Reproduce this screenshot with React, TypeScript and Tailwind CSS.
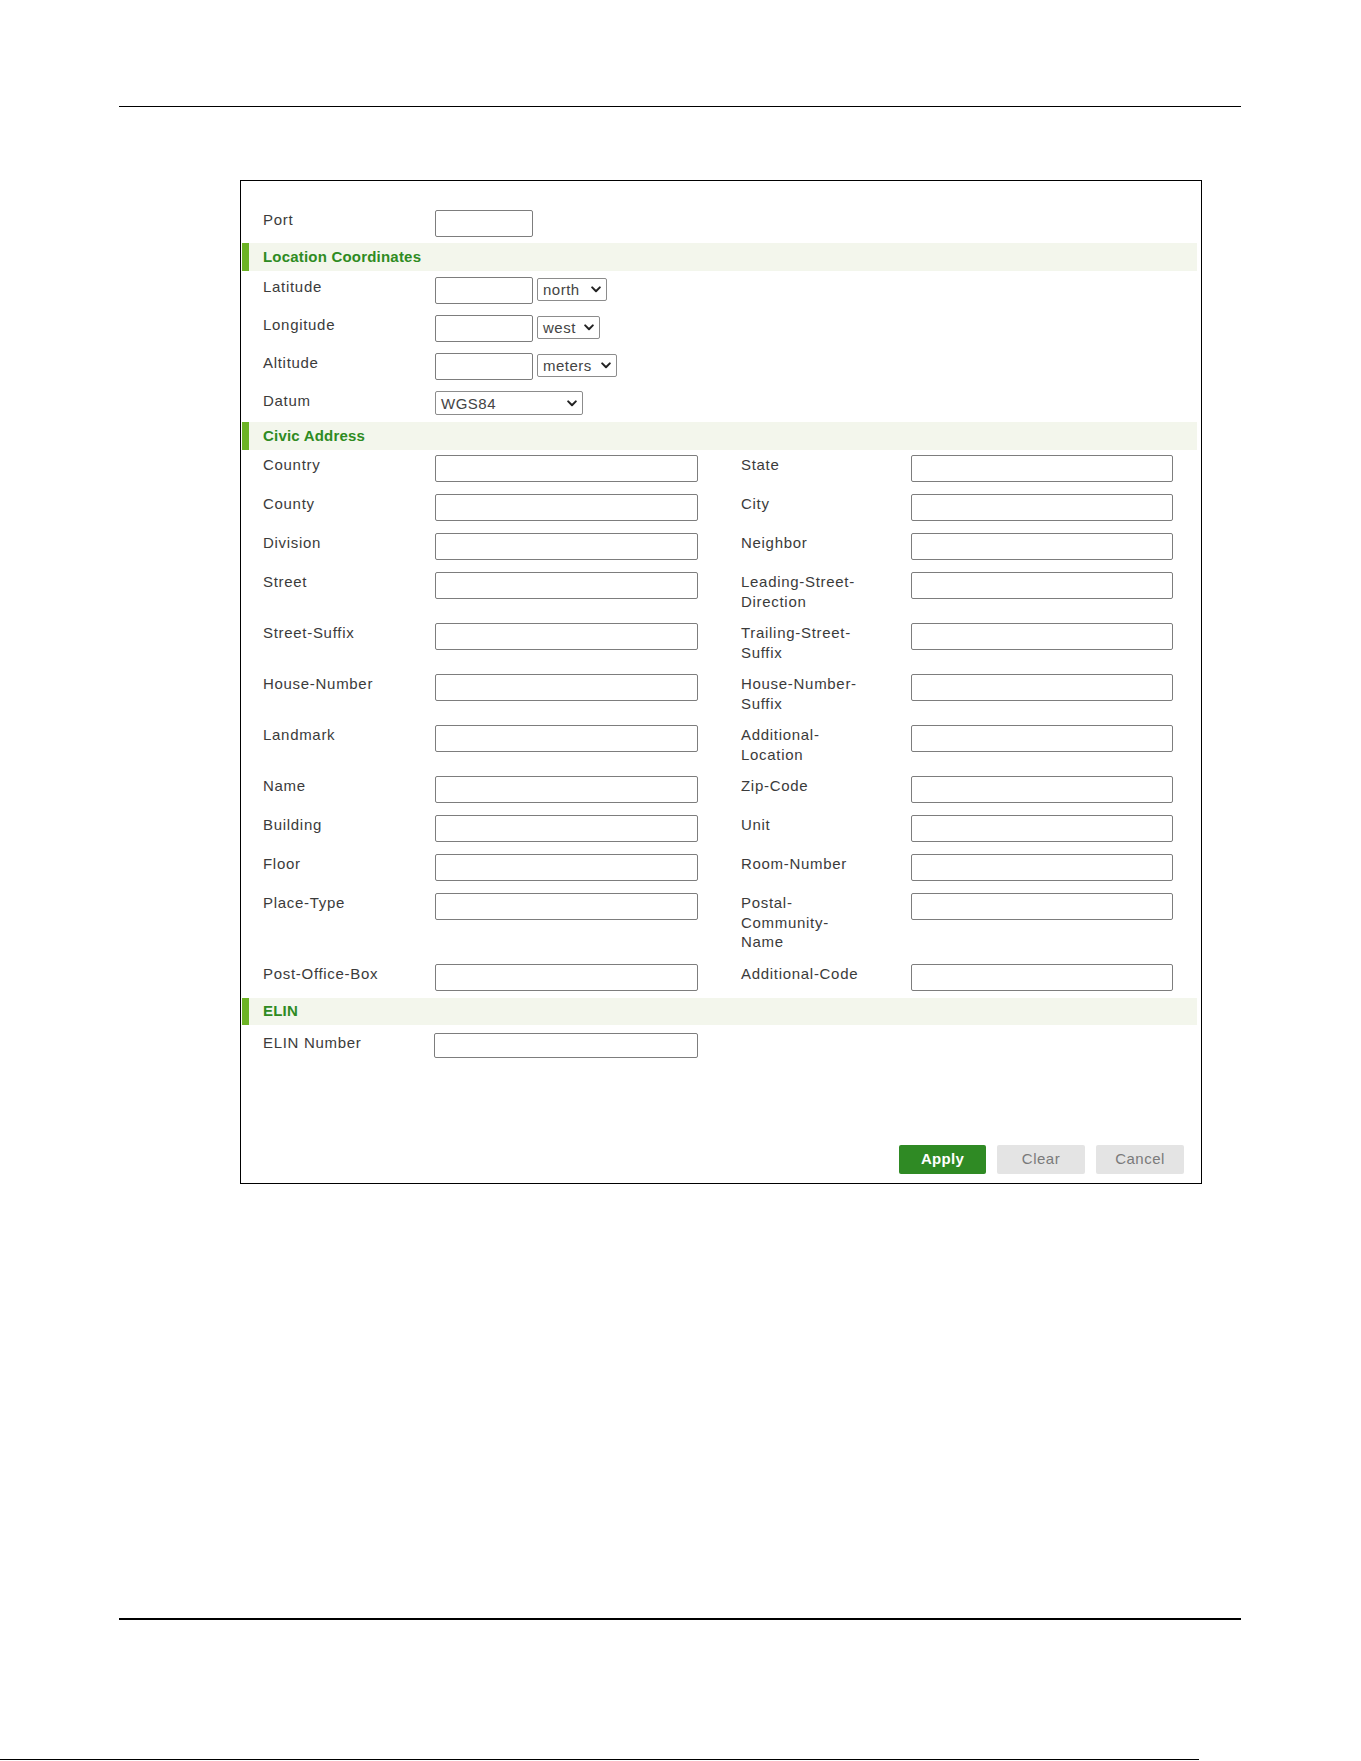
import React from "react";

const FONT = "font-['Liberation_Sans',Arial,sans-serif]";

function Chevron() {
  return (
    <svg width="10" height="7" viewBox="0 0 10 7" className="shrink-0">
      <path d="M1.2 1.4 L5 5.2 L8.8 1.4" fill="none" stroke="#222" strokeWidth="2" strokeLinecap="round" strokeLinejoin="round" />
    </svg>
  );
}

function Select({ value, width }: { value: string; width: string }) {
  return (
    <div
      className={`flex h-[23px] items-center justify-between rounded-[2px] border border-[#8c8c8c] bg-white pl-[5px] pr-[5px] text-[15px] tracking-[0.5px] text-[#444] ${width}`}
    >
      <span className="leading-none">{value}</span>
      <Chevron />
    </div>
  );
}

function Field({ width = "w-[263px]", height = "h-[27px]" }: { width?: string; height?: string }) {
  return <div className={`${width} ${height} shrink-0 rounded-[2px] border border-[#7d7d7d] bg-white`} />;
}

function Label({ lines, width = "w-[172px]" }: { lines: string[]; width?: string }) {
  return (
    <div className={`${width} shrink-0 text-[15px] leading-[19.5px] tracking-[0.7px] text-[#3b3b3b]`}>
      {lines.map((l) => (
        <div key={l}>{l}</div>
      ))}
    </div>
  );
}

function SectionHeader({ title, h = "h-[28px]" }: { title: string; h?: string }) {
  return (
    <div className={`flex ${h} items-stretch bg-[#f3f6ec]`}>
      <div className="w-[7px] bg-[#6cb324]" />
      <div className="flex items-center pl-[14px] text-[15px] font-bold tracking-[0.2px] text-[#2e8b22]">
        {title}
      </div>
    </div>
  );
}

type Pair = { left: string[]; right: string[] };

const civic: Pair[] = [
  { left: ["Country"], right: ["State"] },
  { left: ["County"], right: ["City"] },
  { left: ["Division"], right: ["Neighbor"] },
  { left: ["Street"], right: ["Leading-Street-", "Direction"] },
  { left: ["Street-Suffix"], right: ["Trailing-Street-", "Suffix"] },
  { left: ["House-Number"], right: ["House-Number-", "Suffix"] },
  { left: ["Landmark"], right: ["Additional-", "Location"] },
  { left: ["Name"], right: ["Zip-Code"] },
  { left: ["Building"], right: ["Unit"] },
  { left: ["Floor"], right: ["Room-Number"] },
  { left: ["Place-Type"], right: ["Postal-", "Community-", "Name"] },
  { left: ["Post-Office-Box"], right: ["Additional-Code"] },
];

function CivicRow({ pair }: { pair: Pair }) {
  return (
    <div className="flex min-h-[39px] items-start pl-[21px] pt-[5px] pb-[7px]">
      <Label lines={pair.left} />
      <Field />
      <div className="w-[43px] shrink-0" />
      <Label lines={pair.right} width="w-[170px]" />
      <Field width="w-[262px]" />
    </div>
  );
}

function CoordRow({ label, select, selectW }: { label: string; select: string; selectW: string }) {
  return (
    <div className="flex items-start pl-[21px] pt-[6px] pb-[5px]">
      <Label lines={[label]} />
      <Field width="w-[98px]" />
      <div className="ml-[4px] mt-[1px]">
        <Select value={select} width={selectW} />
      </div>
    </div>
  );
}

export default function App() {
  return (
    <div className={`relative h-[1761px] w-[1361px] overflow-hidden bg-white ${FONT}`}>
      <div className="pt-[106px]">
        <div className="ml-[119px] h-px w-[1122px] bg-black" />

        <div className="ml-[240px] mt-[73px] flex h-[1004px] w-[962px] flex-col border border-black pl-px pr-[4px] pt-[23px] pb-[9px]">
          {/* Port */}
          <div className="flex items-start pl-[21px] pt-[6px] pb-[6px]">
            <Label lines={["Port"]} />
            <Field width="w-[98px]" />
          </div>

          <SectionHeader title="Location Coordinates" />
          <CoordRow label="Latitude" select="north" selectW="w-[70px]" />
          <CoordRow label="Longitude" select="west" selectW="w-[63px]" />
          <CoordRow label="Altitude" select="meters" selectW="w-[80px]" />
          <div className="flex items-start pl-[21px] pt-[6px] pb-[7px]">
            <Label lines={["Datum"]} />
            <div className="flex h-[24px] w-[148px] items-center justify-between rounded-[2px] border border-[#8c8c8c] bg-white pl-[5px] pr-[5px] text-[15px] tracking-[0.5px] text-[#444]">
              <span className="leading-none">WGS84</span>
              <Chevron />
            </div>
          </div>

          <SectionHeader title="Civic Address" />
          {civic.map((p) => (
            <CivicRow key={p.left[0]} pair={p} />
          ))}

          <SectionHeader title="ELIN" h="h-[27px]" />
          <div className="flex items-start pl-[21px] pt-[8px]">
            <Label lines={["ELIN Number"]} width="w-[171px]" />
            <Field height="h-[25px]" width="w-[264px]" />
          </div>

          <div className="mt-auto flex justify-end gap-[11px] pr-[13px]">
            <button className="h-[29px] w-[87px] rounded-[2px] bg-[#2f8a24] text-[15px] font-bold tracking-[0.3px] text-white">
              Apply
            </button>
            <button className="h-[29px] w-[88px] rounded-[2px] bg-[#e4e4e4] text-[15px] tracking-[0.5px] text-[#7a7a7a]">
              Clear
            </button>
            <button className="h-[29px] w-[88px] rounded-[2px] bg-[#e4e4e4] text-[15px] tracking-[0.5px] text-[#7a7a7a]">
              Cancel
            </button>
          </div>
        </div>

        <div className="ml-[119px] mt-[434px] h-[2px] w-[1122px] bg-black" />
        <div className="mt-[139px] h-px w-[1199px] bg-black" />
      </div>
    </div>
  );
}
